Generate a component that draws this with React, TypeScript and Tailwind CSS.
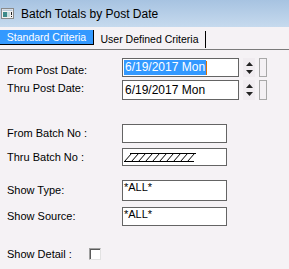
import React from 'react';

const font = { fontFamily: '"Liberation Sans", Arial, sans-serif' };

const Label: React.FC<{ text: string; shift?: string }> = ({ text, shift = '' }) => (
  <div className={`w-[122px] pl-[7px] text-[11px] text-black leading-none ${shift}`}>{text}</div>
);

const Spinner: React.FC = () => (
  <div className="flex items-center h-full ml-[4px]">
    <div className="w-[12px] h-full bg-[#f0ecf0] flex flex-col items-center justify-center gap-[4px]">
      <svg width="7" height="4" viewBox="0 0 7 4"><path d="M3.5 0 L7 4 L0 4 Z" fill="#222" /></svg>
      <svg width="7" height="4" viewBox="0 0 7 4"><path d="M0 0 L7 0 L3.5 4 Z" fill="#222" /></svg>
    </div>
    <div className="w-[8px] h-full ml-[4px] border border-[#a8a8a8] bg-[#f4f1f4]" />
  </div>
);

const Hatch: React.FC = () => (
  <svg width="72" height="9" viewBox="0 0 72 9" className="ml-[1px]">
    <line x1="6" y1="0.5" x2="72" y2="0.5" stroke="#000" strokeWidth="1" />
    <line x1="0" y1="8.5" x2="70" y2="8.5" stroke="#000" strokeWidth="1" />
    {Array.from({ length: 10 }).map((_, i) => (
      <line key={i} x1={i * 7 + 0.5} y1="8.5" x2={i * 7 + 7.5} y2="0.5" stroke="#000" strokeWidth="1" />
    ))}
  </svg>
);

export default function App() {
  return (
    <div className="w-[289px] h-[269px] bg-[#f5f2f5] overflow-hidden flex flex-col" style={font}>
      {/* Title bar */}
      <div className="h-[27px] bg-gradient-to-b from-[#a7c3e1] to-[#c6daee] flex items-center pl-[1px]">
        <svg width="13" height="11" viewBox="0 0 13 11">
          <rect x="0.5" y="0.5" width="12" height="10" fill="#f2f2f2" stroke="#8a8a8a" />
          <rect x="1.5" y="1.5" width="10" height="1.5" fill="#b8c8d8" />
          <rect x="2" y="4" width="4" height="5" fill="#3d8a8a" />
          <rect x="6" y="4" width="3" height="5" fill="#c9dfe0" />
          <rect x="10" y="4" width="1" height="3" fill="#222" />
          <rect x="10" y="8" width="1" height="1" fill="#222" />
        </svg>
        <span className="ml-[7px] text-[12px] text-black">Batch Totals by Post Date</span>
      </div>

      {/* Tabs */}
      <div className="h-[23px] flex items-start border-b border-[#7a7a7a]">
        <div className="mt-[3px] flex">
          <div className="w-[94px] h-[15px] bg-[#3399ff] border-r border-b border-black flex items-center justify-center text-white text-[10.5px] leading-none">
            Standard Criteria
          </div>
          <div className="w-[112px] h-[17px] mt-[1px] border-r border-black flex items-center justify-center text-black text-[10.5px] leading-none">
            User Defined Criteria
          </div>
        </div>
      </div>

      {/* Body */}
      <div className="flex flex-col">
        <div className="mt-[8px] h-[19px] flex items-center">
          <Label text="From Post Date:" shift="mt-[5px]" />
          <div className="w-[117px] h-full border border-[#646464] bg-white flex items-center pl-[1px]">
            <span className="bg-[#3399ff] text-white text-[12px] leading-[15px] px-[1px]">6/19/2017 Mon</span>
            <span className="w-[1px] h-[14px] bg-[#e07000]" />
          </div>
          <Spinner />
        </div>
        <div className="mt-[3px] h-[20px] flex items-center">
          <Label text="Thru Post Date:" shift="-mt-[4px]" />
          <div className="w-[117px] h-full border border-[#646464] bg-white flex items-center pl-[2px]">
            <span className="text-black text-[12px] leading-none">6/19/2017 Mon</span>
          </div>
          <Spinner />
        </div>

        <div className="mt-[24px] h-[19px] flex items-center">
          <Label text="From Batch No :" />
          <div className="w-[105px] h-full border border-[#646464] bg-white" />
        </div>
        <div className="mt-[5px] h-[18px] flex items-center">
          <Label text="Thru Batch No :" />
          <div className="w-[105px] h-full border border-[#646464] bg-white flex items-center">
            <Hatch />
          </div>
        </div>

        <div className="mt-[14px] h-[21px] flex items-center">
          <Label text="Show Type:" />
          <div className="w-[105px] h-full border border-[#646464] bg-white flex items-start pt-[1px] pl-[1px]">
            <span className="text-[11px] text-black leading-none">*ALL*</span>
          </div>
        </div>
        <div className="mt-[6px] h-[19px] flex items-center">
          <Label text="Show Source:" />
          <div className="w-[105px] h-full border border-[#646464] bg-white flex items-start pt-[1px] pl-[1px]">
            <span className="text-[11px] text-black leading-none">*ALL*</span>
          </div>
        </div>

        <div className="mt-[22px] h-[12px] flex items-center">
          <div className="w-[89px] pl-[7px] text-[11px] text-black leading-none">Show Detail :</div>
          <div className="w-[12px] h-[12px] bg-white border border-t-[#a0a0a0] border-l-[#a0a0a0] border-r-[#e2e2e2] border-b-[#e2e2e2]">
            <div className="w-full h-full border-t border-l border-[#5a5a5a]" />
          </div>
        </div>
      </div>
    </div>
  );
}
